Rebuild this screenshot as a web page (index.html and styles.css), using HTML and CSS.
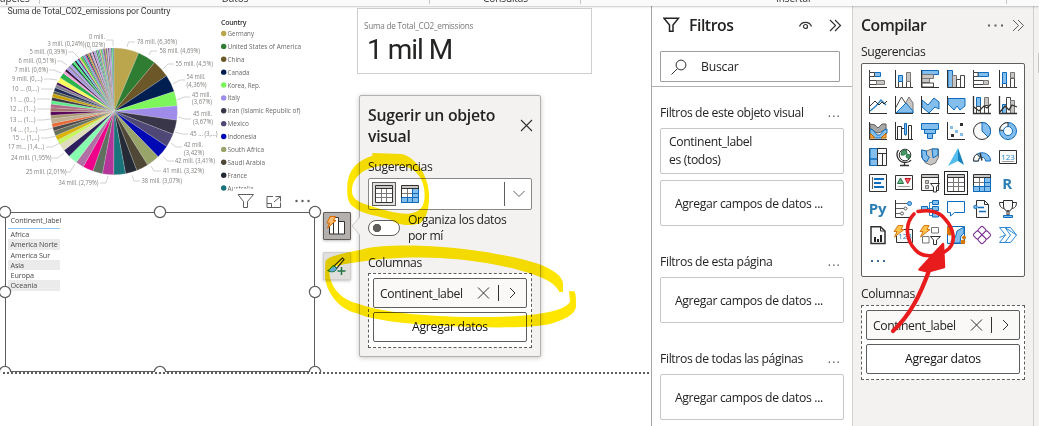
FILE: index.html
```html
<!DOCTYPE html>
<html lang="es">
<head>
<meta charset="utf-8">
<title>Informe</title>
<link rel="stylesheet" href="styles.css">
</head>
<body>
<header class="ribbon">
  <div class="group g1"><span>apeles</span></div>
  <div class="group g2"><span>Datos</span></div>
  <div class="group g3"><span>Consultas</span></div>
  <div class="group g4"><span>Insertar</span></div>
</header>
<main class="workspace">
  <section class="canvas">
    <svg class="pie" width="350" height="194" viewBox="0 6 350 194">
      <text class="pie-title" x="7.5" y="14" textLength="163">Suma de Total_CO2_emissions por Country</text>
      <g id="slices"></g>
      <g id="leaders"></g>
      <g id="labels"></g>
      <text class="legend-title" x="221" y="25.3" textLength="25.5">Country</text>
      <g id="legend"></g>
    </svg>

    <div class="card-visual">
      <div class="card-label">Suma de Total_CO2_emissions</div>
      <div class="card-value">1 mil M</div>
    </div>

    <svg class="visual-tools" width="76" height="18" viewBox="0 0 76 18" fill="none" stroke="#605e5c">
      <path d="M1 1.500h15.500L10.500 8.500v6h-4v-6z" stroke-width="1"/>
      <path d="M36 3.500h-6v11h13.500v-5M30 10.500h4.500v4M38.500 3.500h5v5M43.500 3.500l-6.500 5.500"/>
      <g fill="#605e5c" stroke="none"><circle cx="59.500" cy="8" r="1.200"/><circle cx="65.500" cy="8" r="1.200"/><circle cx="71.500" cy="8" r="1.200"/></g>
    </svg>

    <div class="table-visual">
      <div class="data-table">
        <div class="th">Continent_label</div>
        <div>Africa</div><div>America Norte</div><div>America Sur</div><div>Asia</div><div>Europa</div><div>Oceania</div>
      </div>
    </div>
    <svg class="handles" width="324" height="168" viewBox="-1 205 324 168" fill="#fff" stroke="#605e5c" stroke-width="1.200">
      <circle cx="5" cy="212" r="5.600"/><circle cx="160" cy="212" r="5.600"/><circle cx="315" cy="212" r="5.600"/>
      <circle cx="5" cy="292" r="5.600"/><circle cx="315" cy="292" r="5.600"/>
      <circle cx="5" cy="372" r="5.600"/><circle cx="160" cy="372" r="5.600"/><circle cx="315" cy="372" r="5.600"/>
    </svg>
    <div class="page-edge"></div>

    <div class="side-buttons">
      <button class="side-btn active"><svg width="22" height="22" viewBox="0 0 22 22"><path d="M3.500 8.500h4v10.500h-4zM7.500 2.500h5V19h-5zM12.500 6.500h6V19h-6z" fill="#fff" stroke="#323130"/><path d="M4 1.500h5.500L7.500 5.500h2.500L1.500 13l2-5H1z" fill="#ffb96a" stroke="#d86a00"/></svg></button>
      <button class="side-btn"><svg width="22" height="22" viewBox="0 0 22 22"><path d="M16.500 3L8 11l2.500 2.500L18 4.500z" fill="#fff" stroke="#323130" stroke-width="1.200"/><path d="M8 10.500c-3 0-3 4.500-6.500 5 3 2 8.500 2 9-2z" fill="#68a9e0" stroke="#107c41"/><path d="M15.500 12v8M11.500 16h8" stroke="#217346" stroke-width="1.500"/></svg></button>
    </div>

    <div class="popup">
      <svg class="beak" width="9" height="18" viewBox="0 0 9 18"><path d="M9 0L1 9l8 9" fill="#f3f2f1" stroke="#c8c6c4"/></svg>
      <div class="popup-head">
        <h2>Sugerir un objeto visual</h2>
        <svg width="13" height="13" viewBox="0 0 13 13"><path d="M1 1l11 11M12 1L1 12" stroke="#323130" stroke-width="1.100"/></svg>
      </div>
      <div class="lbl sug">Sugerencias</div>
      <div class="combo">
        <span class="pick"><svg width="18" height="18" viewBox="0 0 18 18"><use href="#i-table"/></svg></span>
        <svg class="second" width="18" height="18" viewBox="0 0 18 18"><use href="#i-matrix"/></svg>
        <span class="bar"></span>
        <svg width="12" height="8" viewBox="0 0 12 8" fill="none" stroke="#605e5c"><path d="M.5 1L6 6.500 11.500 1"/></svg>
      </div>
      <div class="toggle-row"><span class="toggle"></span><span class="toggle-text">Organiza los datos<br>por mí</span></div>
      <div class="lbl col">Columnas</div>
      <div class="well">
        <div class="field"><span>Continent_label</span><svg width="40" height="16" viewBox="0 0 40 16" fill="none" stroke="#323130"><path d="M1 2.500l11 11M12 2.500l-11 11M21.500 0v16M33 3l5 5-5 5"/></svg></div>
        <div class="add">Agregar datos</div>
      </div>
    </div>
  </section>

  <aside class="filters">
    <div class="filters-top">
      <div class="pane-head">
        <svg width="17" height="16" viewBox="0 0 17 16"><path d="M1 1.200h14.500L10 8v6.300H6.500V8z" fill="none" stroke="#252423" stroke-width="1.500"/></svg>
        <h2>Filtros</h2>
        <svg class="eye" width="13" height="9" viewBox="0 0 13 9" fill="none" stroke="#323130" stroke-width="1.200"><path d="M.5 5.500C2.500 0 10.500 0 12.500 5.500"/><circle cx="6.500" cy="5.500" r="2"/></svg>
        <svg width="13" height="13" viewBox="0 0 13 13" fill="none" stroke="#323130" stroke-width="1.200"><path d="M1 1l5.500 5.500L1 12M6 1l5.500 5.500L6 12"/></svg>
      </div>
      <div class="search"><svg width="16" height="16" viewBox="0 0 16 16" fill="none" stroke="#323130"><circle cx="10" cy="6" r="4.900"/><path d="M6.500 9.500L.5 15.500"/></svg><span>Buscar</span></div>
    </div>
    <div class="filter-group">
      <div class="filter-title"><span>Filtros de este objeto visual</span><i>...</i></div>
      <div class="filter-card">Continent_label<br>es (todos)</div>
      <div class="filter-card drop">Agregar campos de datos ...</div>
    </div>
    <div class="filter-group">
      <div class="filter-title"><span>Filtros de esta página</span><i>...</i></div>
      <div class="filter-card drop">Agregar campos de datos ...</div>
    </div>
    <div class="filter-group">
      <div class="filter-title"><span>Filtros de todas las páginas</span><i>...</i></div>
      <div class="filter-card drop">Agregar campos de datos ...</div>
    </div>
  </aside>

  <aside class="build">
    <div class="pane-head">
      <h2>Compilar</h2>
      <svg class="dots" width="16" height="3" viewBox="0 0 16 3" fill="#605e5c"><path d="M0 .5h2v2H0zM6.500.5h2v2h-2zM13 .5h2v2h-2z"/></svg>
      <svg width="13" height="13" viewBox="0 0 13 13" fill="none" stroke="#605e5c"><path d="M1 1l5.500 5.500L1 12M6 1l5.500 5.500L6 12"/></svg>
    </div>
    <div class="lbl">Sugerencias</div>
    <div class="gallery">
      <svg viewBox="0 0 18 18"><path class="k" d="M.5 0v17.500H18"/><path class="b" d="M5.500 2.500h6v4h-6z"/><path class="w" d="M.5 2.500h5v4h-5z"/><path class="w" d="M.5 10.500h7v4h-7z"/><path class="g" d="M7.500 10.500h8v4h-8z"/></svg>
      <svg viewBox="0 0 18 18"><path class="k" d="M.5 0v17.500H18"/><path class="w" d="M3.500 11.500h4v6h-4zM11.500 11.500h4v6h-4z"/><path class="b" d="M3.500 5.500h4v6h-4z"/><path class="g" d="M11.500 2.500h4v9h-4z"/></svg>
      <svg viewBox="0 0 18 18"><path class="b" d="M1 .5h16.500v4H1z"/><path class="g" d="M1 4.500h11.500v4H1zM1 8.500h7.500v4H1z"/><path class="w" d="M1 13h11.500v4H1z"/><path class="k" d="M.5 0v17.500H18"/></svg>
      <svg viewBox="0 0 18 18"><path class="b" d="M1 .5h4.500v17H1z"/><path class="g" d="M5.500 5.500h4v12h-4z"/><path class="w" d="M9.500 9.500h4v8h-4zM13.500 5.500h4v12h-4z"/><path class="k" d="M.5 0v17.500H18"/></svg>
      <svg viewBox="0 0 18 18"><path class="k" d="M.5 0v17.500H18"/><path class="b" d="M5 2.500h10.500v4H5z"/><path class="w" d="M.5 2.500H5v4H.5zM.5 10.500h10v4H.5z"/><path class="g" d="M10.500 10.500h5v4h-5z"/></svg>
      <svg viewBox="0 0 18 18"><path class="k" d="M.5 0v17.500H18"/><path class="w" d="M3.500 13.500h4v4h-4zM11.500 8.500h4v9h-4z"/><path class="b" d="M3.500 2.500h4v11h-4z"/><path class="g" d="M11.500 2.500h4v5.500h-4z"/></svg>

      <svg viewBox="0 0 18 18"><path class="bl" stroke-width="1.400" d="M1 15l6-5 5-6 5 5"/><path class="k" d="M.5 0v17.500H18M1 10l5-5 4 4 3-3 2 2 3-3"/></svg>
      <svg viewBox="0 0 18 18"><path class="g" d="M8 11l6-10 4 6v10z"/><path class="w" d="M.5 12L6.500 1l7 11v5H.5z"/><path class="b" d="M1 17l10-10 7 8v2z"/><path class="k" d="M.5 0v17.500H18"/></svg>
      <svg viewBox="0 0 18 18"><path class="b" d="M1 4l6 5 6-7 5 4v7l-4-2-6 6-7-6z"/><path class="k" d="M.5 0v17.500H18"/></svg>
      <svg viewBox="0 0 18 18"><path class="b" d="M1 2.500h17V10l-5 4-3-4-3 4-6-6z"/><path class="k" d="M.5 0v17.500H18"/></svg>
      <svg viewBox="0 0 18 18"><path class="b" d="M3.500 1.500h4v9h-4z"/><path class="g" d="M11.500 1.500h4v8h-4z"/><path class="w" d="M3.500 10.500h4v7h-4zM11.500 9.500h4v8h-4z"/><path class="k" stroke-width="1.300" d="M.5 0v17.500H18M1 11l5 4 5-5 3 2 4-4"/></svg>
      <svg viewBox="0 0 18 18"><path class="b" d="M3.500 8.500h4v9h-4z"/><path class="w" d="M7.500 1.500h4v16h-4z"/><path class="g" d="M11.500 4.500h4v13h-4z"/><path class="k" stroke-width="1.300" d="M.5 0v17.500H18M1 16l5-6 4 4 3-5 5 2"/></svg>

      <svg viewBox="0 0 18 18"><path d="M1 2l5 1 3 3 4-4h4v5l-5 3-3 1-3-1-5-4z" fill="#a9a7a5" stroke="#605e5c"/><path class="b" d="M1 7l3 1 4 5h3l4-5 3-1v4l-5 5H6l-5-5z"/><path d="M1 11l5 5H1zM17 11l-5 5h5z" fill="#f5a742" stroke="#b86200"/><path class="k" d="M.5 0v17.500H18"/></svg>
      <svg viewBox="0 0 18 18"><path class="k" d="M.5 0v17.500H18M2.500 17V4.500h4V17M6.500 6.500h4v7"/><path class="b" d="M9.500 1.500h2v11h-2z"/><path class="k" d="M13.500 17V3.500h3V17"/></svg>
      <svg viewBox="0 0 18 18"><path class="b" d="M.5 1.500h17v6H.5zM3.500 7.500h11v4h-11zM6.500 11.500h5v5h-5z"/></svg>
      <svg viewBox="0 0 18 18"><path class="k" d="M.5 0v17.500H18"/><path fill="#83beec" d="M3 4h3v3H3zM8 8h3v3H8zM13 11h3v3h-3z"/><path fill="#323130" d="M13 1h3v3h-3zM4 12h3v3H4z"/></svg>
      <svg viewBox="0 0 18 18"><circle class="k f" cx="9" cy="9" r="8.500"/><path class="b" d="M9 .5A8.500 8.500 0 0 1 15 15L9 9z"/></svg>
      <svg viewBox="0 0 18 18"><circle class="b" cx="9" cy="9" r="8.500"/><path class="k f" d="M9 9V.5A8.500 8.500 0 0 0 .5 8z"/><circle class="bw" cx="9" cy="9" r="4.500"/></svg>

      <svg viewBox="0 0 18 18"><path class="k f" d="M.5.5h17v17H.5z"/><path class="b" d="M1 .5h7.500V11H1zM1 11h7.500v6.500H1z"/><path class="k" d="M8.500.5v17M9 5.500h8.500M13.500 5.500v12"/></svg>
      <svg viewBox="0 0 18 18"><circle cx="10" cy="7" r="5.800" fill="#fff" stroke="#323130"/><path d="M7 3l4-1 1 3-3 2H6zM12 6l3 1-1 4-3-2z" fill="#4b9b68" stroke="#217346"/><path class="k" stroke-width="1.300" d="M3.500 2C0 7 3 14 10 14.500c3 0 5-1 6-2.500M9.500 14.500v3M5 17.500h9"/></svg>
      <svg viewBox="0 0 18 18"><path class="g" d="M.5 2l5 1 5-2h7v8l-3 6-5 2-5-2-4-6z"/><path class="b" d="M.5 2l5 1v4l3 2-3 5-4-3zM11 1h6v6l-5 3z"/></svg>
      <svg viewBox="0 0 18 18"><path d="M11 0L1 18l10-5z" fill="#55bdee"/><path d="M11 0l6 17-6-4z" fill="#1683bf"/></svg>
      <svg viewBox="0 0 18 18"><path class="b" d="M.5 13C.5 2 17.500 2 17.500 13h-5c0-5-7-5-7 0z"/><path class="k f" d="M.5 13C.5 9 2 7 4 6l3 3.500C6 10 5.500 11 5.500 13z"/><path d="M9 12.500L7 5" stroke="#323130" stroke-width="1.500"/></svg>
      <svg viewBox="0 0 18 18"><path class="k f" d="M.5 2.500h17v13H.5z"/><text x="9" y="11.500" class="num">123</text><path d="M3 13.500h12" stroke="#a19f9d"/></svg>

      <svg viewBox="0 0 18 18"><path class="k f" d="M.5.5h17v17H.5z"/><path d="M3.500 3v12" stroke="#605e5c"/><path d="M5 5h10M5 9h7M5 13h10" stroke="#0f6cbd" stroke-width="2"/></svg>
      <svg viewBox="0 0 18 18"><path class="k f" d="M.5 1.500h17v14H.5z"/><path d="M2.500 9.500L5.500 4l3 5.500z" fill="#70b78a" stroke="#217346"/><path d="M10 4.500h5.500l-2.800 5z" fill="#f06870" stroke="#c50f1f"/><path d="M3 12.500h12" stroke="#a19f9d"/></svg>
      <svg viewBox="0 0 18 18"><path class="k f" d="M.5.5h17v16H.5z"/><path d="M1 1h16v2H1z" fill="#c8c6c4"/><path class="k" d="M.5 3.500h17"/><path class="g" d="M4.500 6.500h3v3h-3zM4.500 11.500h3v3h-3z"/><path d="M9.500 9.500h9L15.500 13v5h-3v-5z" fill="#fff" stroke="#323130"/></svg>
      <svg class="selected" viewBox="0 0 18 18"><g id="i-table"><path d="M.5.5h17v17H.5z" fill="#fff" stroke="#323130"/><path d="M1 1h16v2H1z" fill="#c8c6c4"/><path d="M1 8.500h16M1 12.500h16M6.500 4v13M11.500 4v13" stroke="#797775" fill="none"/><path d="M.5 3.500h17" stroke="#323130"/></g></svg>
      <svg viewBox="0 0 18 18"><g id="i-matrix"><path d="M.5.5h17v17H.5z" fill="#fff" stroke="#323130"/><path d="M1 1h16v2H1z" fill="#c8c6c4"/><path d="M12 4h5.500v13.500H1v-4.500h11z" fill="#83beec"/><path d="M1 8.500h11M6.500 4v9" stroke="#797775"/><path d="M11.500 4v13.500M.5 12.500h17M12 8.500h5.500M6.500 13v4.500M17.500 4v13.500H.5V13" stroke="#0f6cbd" fill="none"/><path d="M.5 3.500h17" stroke="#323130"/></g></svg>
      <svg viewBox="0 0 18 18"><text x="8" y="14.500" class="letter">R</text></svg>

      <svg viewBox="0 0 18 18"><text x="8.500" y="13.500" class="letter">Py</text></svg>
      <svg viewBox="0 0 18 18"><path d="M.5 0v17.500H16" fill="none" stroke="#323130"/><path d="M1 3.500h11M1 8.500h8M1 13.500h5" stroke="#605e5c"/><circle class="b" cx="14.500" cy="3.500" r="2"/><circle cx="10.500" cy="8.500" r="1.500" fill="#fff" stroke="#605e5c"/><circle cx="7" cy="13.500" r="1.500" fill="#fff" stroke="#605e5c"/></svg>
      <svg viewBox="0 0 18 18"><path class="bl" d="M6 8.500h5M8.500 2.500v13M8.500 2.500H12M8.500 15.500H12"/><path class="b" d="M.5 6.500h6v4h-6zM11.500.5h6v4h-6zM11.500 6.500h6v4h-6zM11.500 13h6v4h-6z"/></svg>
      <svg viewBox="0 0 18 18"><path class="bw" d="M.5 1.500h17v11H7.500L3.500 16v-3.500h-3z"/></svg>
      <svg viewBox="0 0 18 18"><path class="k f" d="M3.500.5h8l4 4v13h-12z"/><path class="k" d="M11.500.5v4h4"/><circle class="b" cx="2.500" cy="7" r="1.700"/><path d="M5 7.500h6M6 11.500h7" stroke="#0f6cbd" stroke-width="1.400"/></svg>
      <svg viewBox="0 0 18 18"><path class="k" d="M4 2.500H.5c0 4 2 6 5 6M14 2.500h3.500c0 4-2 6-5 6"/><path class="k f" d="M4.500.5h9V6c0 3-2 5-4.500 5S4.500 9 4.500 6zM8 11h2v4H8z"/><path class="b" d="M4.500 15.500h9v2h-9z"/></svg>

      <svg viewBox="0 0 18 18"><path class="k f" stroke-width="1.500" d="M2 .7h9.500L16 5v12.500H2z"/><path class="k" d="M11.500.5V5H16"/><path d="M5 11h2v5H5zM8 13h2v3H8zM11 9h2v7h-2z" fill="#252423"/></svg>
      <svg viewBox="0 0 18 18"><path class="k f" d="M1.500 3.500h16v13h-16z"/><text x="10" y="13" class="num">123</text><path class="o" d="M3-.5h5L6 3.500h3L-.5 11 2 5.500h-3z"/></svg>
      <svg viewBox="0 0 18 18"><path d="M10.500 1.500h7v5.500h-7zM1.500 10.500h6.500v6.500H1.500z" fill="#fff" stroke="#797775"/><path d="M9.500 10.500h10L15.500 14v4.500h-3V14z" fill="#fff" stroke="#323130"/><path class="o" d="M3-.5h5L6 3.500h3L-.5 11 2 5.500h-3z"/></svg>
      <svg viewBox="0 0 18 18"><path d="M.5.5h17v17H.5z" fill="#fff" stroke="#0f6cbd"/><path d="M3 17l5-4 2-8 7-4v6l-3 3-1 7z" fill="#83beec" stroke="#0f6cbd"/><path d="M1 17l5-6 3 1-3 5z" fill="#c8e0f4"/><path d="M0 1h4l1 6-2 3-3-2z" fill="#d87500"/><circle cx="17" cy="11.500" r="1.900" fill="#d87500"/><circle cx="16" cy="16" r="2.300" fill="#d87500"/></svg>
      <svg viewBox="0 0 18 18"><g fill="#fff" stroke="#7b2d91" stroke-width="1.100"><rect x="5.700" y="1.200" width="6.600" height="6.600" rx="1.500" transform="rotate(45 9 4.500)"/><rect x="1.200" y="5.700" width="6.600" height="6.600" rx="1.500" transform="rotate(45 4.500 9)"/><rect x="10.200" y="5.700" width="6.600" height="6.600" rx="1.500" transform="rotate(45 13.500 9)"/><rect x="5.700" y="10.200" width="6.600" height="6.600" rx="1.500" transform="rotate(45 9 13.500)"/></g></svg>
      <svg viewBox="0 0 18 18"><path d="M.5 1.500H6L17.500 9 M.5 1.500l6 7.500-6 7.500H6L11.500 9 6 1.500M6 1.500h5.500L17.500 9l-6 7.500H6M.5 11.500L6.500 9" fill="none" stroke="#2b88d8"/></svg>
      <svg class="more" viewBox="0 0 18 18"><path fill="#3b6da0" d="M2 7h2v2H2zM8 7h2v2H8zM14 7h2v2h-2z"/></svg>
    </div>
    <div class="lbl col">Columnas</div>
    <div class="well">
      <div class="field"><span>Continent_label</span><svg width="40" height="16" viewBox="0 0 40 16" fill="none" stroke="#323130"><path d="M1 2.500l11 11M12 2.500l-11 11M21.500 0v16M33 3l5 5-5 5"/></svg></div>
      <div class="add">Agregar datos</div>
    </div>
  </aside>
  <div class="rail"><span></span></div>
</main>

<svg class="marker highlight" width="1039" height="426" viewBox="0 0 1039 426">
  <g fill="#ffe600" fill-rule="evenodd">
    <path transform="translate(320 90) scale(.33333)" d="M157 189L245 192C290 203 325 260 327 310C328 350 322 385 300 400C270 410 230 405 215 390C170 375 130 375 100 350C85 340 80 320 82 290C84 250 100 215 157 197ZM150 235C120 245 97 270 96 298C95 325 110 335 150 347C190 360 230 372 265 371C300 368 314 350 314 315C314 270 290 230 240 227C200 223 170 228 150 235Z"/>
    <path transform="translate(320 230) scale(.33333)" d="M16 95C20 80 60 72 120 60C160 48 210 46 300 47C430 50 570 75 650 100C700 118 728 140 729 160V186H718C712 170 690 150 650 137C560 105 440 85 330 83C240 80 160 88 100 98C60 105 30 108 28 125C30 170 60 205 110 220C180 245 280 256 400 260C530 264 640 258 690 245C725 238 745 225 750 215L747 183L762 184C768 190 768 200 768 230C765 255 730 270 690 282C640 294 520 294 400 289C280 284 170 275 110 250C50 235 18 180 15 140Z"/>
  </g>
</svg>
<svg class="marker" width="1039" height="426" viewBox="0 0 1039 426">
  <path d="M918 211.500C928 209.500 939 211 945 219C954 229 956 241 949 248.500C941 256.500 923 259 915.500 250C905 239 905 223 914 214" fill="none" stroke="#e81c1c" stroke-width="3.600" stroke-linecap="round"/>
  <path d="M943 244L919.500 269.500L928 271.500L944 267Z" fill="#e81c1c" stroke="#e81c1c" stroke-width="2.500" stroke-linejoin="round"/>
  <path d="M893 331C910 315 920 296 930 268" fill="none" stroke="#e81c1c" stroke-width="4.200" stroke-linecap="round"/>
</svg>
<script src="chart.js"></script>
</body>
</html>
```
FILE: styles.css
```css
* { box-sizing: border-box; }
body { margin: 0; width: 1039px; height: 426px; overflow: hidden; position: relative; background: #fff; color: #252423; font-family: "Open Sans", "Noto Sans", sans-serif; font-size: 12.2px; letter-spacing: -.37px; }
h2 { margin: 0; font-size: 15.800px; font-weight: 600; letter-spacing: -.27px; }
svg { display: block; flex: none; }

.ribbon { position: relative; z-index: 2; display: flex; height: 6px; background: #fafafa; box-shadow: 0 1px 2px rgba(0,0,0,.22); }
.group { position: relative; height: 6px; padding-bottom: 2px; overflow: hidden; display: flex; align-items: flex-end; justify-content: center; font-size: 10px; letter-spacing: -.1px; line-height: 11px; color: #323130; }
.group::after { content: ""; position: absolute; right: 0; top: 0; width: 1px; height: 4px; background: #c8c6c4; }
.g1 { width: 40px; justify-content: flex-start; }
.g2 { width: 390px; }
.g3 { width: 151px; }
.g4 { width: 426px; }

.workspace { display: flex; height: 420px; }
.canvas { position: relative; width: 651px; background: #fff; }
.pie { position: absolute; left: 0; top: 0; }
.pie text { font-size: 6.400px; fill: #84827f; letter-spacing: 0; }
.pie .pie-title { font: 8.800px Roboto, sans-serif; fill: #3b3a39; }
.pie .legend-title { font-weight: 600; font-size: 7px; fill: #323130; }
.pie .legend-item { font-size: 7px; fill: #6a6866; }
.pie polyline { fill: none; stroke: #c8c6c4; stroke-width: .8; }

.card-visual { position: absolute; left: 357px; top: 2px; width: 235px; height: 66px; border: 1px solid #cfcfcf; padding: 10px 6px; }
.card-label { font-size: 8.200px; line-height: 12px; letter-spacing: -.25px; color: #77797c; padding-top: 1px; }
.card-value { font: 28px/32px Roboto, sans-serif; letter-spacing: -1px; padding: 2px 0 0 3px; }

.visual-tools { position: absolute; left: 237px; top: 187px; }
.table-visual { position: absolute; left: 5px; top: 206px; width: 310px; height: 160px; border: 1px solid #605e5c; background: #fff; padding: 1px 2px; }
.data-table { width: 52px; font-size: 7.200px; line-height: 10px; letter-spacing: -.1px; color: #4b4a49; white-space: nowrap; }
.data-table div { padding-left: 2.500px; height: 10.300px; }
.data-table .th { height: 15px; line-height: 12px; border-bottom: 1px solid #8cc8f5; }
.data-table div:nth-child(odd):not(.th) { background: #ebebeb; }
.handles { position: absolute; left: -1px; top: 199px; }
.page-edge { position: absolute; left: 3px; top: 366px; width: 647px; height: 2px; background: repeating-linear-gradient(90deg, #605e5c 0 2px, #fff 2px 4px); }

.side-buttons { position: absolute; left: 323px; top: 206px; display: flex; flex-direction: column; gap: 12px; }
.side-btn { width: 28px; height: 28px; padding: 2px; background: #e1dfdd; border: 1px solid #d2d0ce; border-radius: 1px; box-shadow: 0 1px 3px rgba(0,0,0,.25); }
.side-btn.active { background: #b3b0ad; border-color: #605e5c; }

.popup { position: absolute; left: 359px; top: 89px; width: 182px; height: 262px; padding: 9px 8px 8px; background: #f3f2f1; border: 1px solid #b3b0ad; border-radius: 2px; box-shadow: 0 1px 5px rgba(0,0,0,.22); }
.beak { position: absolute; left: -9px; top: 121px; }
.popup-head { display: flex; justify-content: space-between; align-items: center; height: 41px; }
.popup-head h2 { width: 140px; line-height: 20.500px; }
.popup-head svg { margin: -1px -1px 0 0; }
.lbl { line-height: 16px; }
.popup .sug { margin-top: 13px; }
.combo { display: flex; align-items: center; height: 32px; margin-top: 3px; width: 164px; border: 1px solid #8a8886; border-radius: 2px; background: #fff; padding-left: 3px; }
.pick { display: flex; width: 24px; height: 24px; padding: 2px; background: #e1dfdd; border: 1px solid #605e5c; }
.second { margin-left: 5px; }
.bar { width: 1px; height: 24px; background: #605e5c; margin: 0 8px 0 85px; }
.toggle-row { display: flex; margin-top: 2px; gap: 8px; height: 33px; }
.toggle { display: block; width: 32px; height: 16px; margin-top: 8px; border: 1px solid #605e5c; border-radius: 8px; background: radial-gradient(circle at 8px 7px, #605e5c 3.800px, #fff 4.500px); }
.toggle-text { line-height: 16px; }
.popup .col { margin-top: 10px; }
.well { width: 164px; height: 75px; padding: 4px; border: 1px dashed #605e5c; background: #fff; display: flex; flex-direction: column; gap: 4px; margin-top: 2px; }
.field, .add { height: 30px; flex: none; border: 1px solid #605e5c; border-radius: 2px; display: flex; align-items: center; }
.field { justify-content: space-between; padding: 0 9px 0 6px; background: #faf9f8; letter-spacing: -.4px; }
.add { justify-content: center; font-weight: 500; letter-spacing: -.28px; background: #fff; color: #11100f; padding-bottom: 1px; }

.filters { width: 201px; border-left: 1px solid #a6a6a6; background: #fff; }
.filters-top { height: 81px; border-bottom: 1px solid #b3b0ad; padding: 8px 10px 0 8px; }
.pane-head { display: flex; align-items: center; height: 22px; }
.filters .pane-head { padding-left: 3px; }
.filters .pane-head h2 { margin-left: 9px; letter-spacing: -.45px; }
.eye { margin-left: auto; margin-right: 17px; }
.search { display: flex; align-items: center; gap: 14px; width: 180px; height: 31px; border: 1px solid #a19f9d; border-radius: 1px; margin-top: 15px; padding-left: 10px; letter-spacing: -.2px; }
.filter-group { padding: 17px 8px 0; }
.filter-group + .filter-group { padding-top: 27px; }
.filter-title { display: flex; justify-content: space-between; height: 17px; line-height: 17px; margin-bottom: 7px; padding-right: 3px; }
.filter-title i { font-style: normal; letter-spacing: 1.200px; color: #605e5c; }
.filter-card { width: 184px; height: 46px; border: 1px solid #c8c6c4; border-radius: 2px; padding: 4px 8px; line-height: 18px; }
.filter-card + .filter-card { margin-top: 6px; }
.filter-card.drop { padding: 14px 14px 12px; white-space: nowrap; letter-spacing: -.35px; }

.build { width: 182px; background: #f3f2f1; border-left: 1px solid #d2d0ce; border-right: 1px solid #d2d0ce; padding: 8px 8px 0; }
.build .pane-head { margin-bottom: 8px; }
.build .pane-head h2 { letter-spacing: -.5px; }
.dots { margin-left: auto; margin-right: 8px; }
.gallery { display: grid; grid-template-columns: repeat(6, 18px); grid-auto-rows: 18px; gap: 8px; width: 164px; height: 214px; margin-top: 3px; padding: 6px 7px; border: 1px solid #605e5c; border-radius: 2px; background: #fff; }
.gallery svg { width: 18px; height: 18px; overflow: visible; }
.gallery .selected { outline: 1px solid #252423; outline-offset: 2px; }
.gallery .more { margin-top: 1px; }
.build .col { margin-top: 9px; }
.build .well { margin-top: 3px; }
.k { fill: none; stroke: #323130; }
.k.f { fill: #fafafa; }
.w { fill: #fff; stroke: #484644; }
.g { fill: #c8c6c4; stroke: #797775; }
.b { fill: #83beec; stroke: #0f6cbd; }
.bl { fill: none; stroke: #2b7fc0; }
.bw { fill: #fff; stroke: #0f6cbd; }
.o { fill: #ffc24b; stroke: #d47a18; }
.num { font-size: 8px; fill: #2b88c8; text-anchor: middle; letter-spacing: 0; }
.letter { font-size: 15px; font-weight: 700; fill: #2b7fb5; text-anchor: middle; letter-spacing: -.2px; }
.rail { width: 5px; background: #f3f2f1; padding-top: 47px; }
.rail span { display: block; width: 1px; height: 20px; margin-left: 4px; background: #c8c6c4; }

.marker { position: absolute; left: 0; top: 0; z-index: 3; pointer-events: none; }
.marker.highlight { mix-blend-mode: multiply; }
```
FILE: chart.js
```js
const NS = "http://www.w3.org/2000/svg";
function add(parent, tag, attrs, text) {
  const el = document.createElementNS(NS, tag);
  for (const k in attrs) el.setAttribute(k, attrs[k]);
  if (text) el.textContent = text;
  document.getElementById(parent).appendChild(el);
}

// [end angle in degrees, colour], clockwise from twelve o'clock
const slices = [
  [22.9, "#bba64e"], [39.8, "#2f7d32"], [56, "#6b5728"], [71.7, "#001f50"], [84.9, "#7cf65a"], [98.1, "#9f8bea"],
  [111.3, "#3a364a"], [123.6, "#4f4876"], [135.9, "#0008b4"], [147.9, "#98a46a"], [158.9, "#4f4836"], [169.5, "#252b36"],
  [180.3, "#18737a"], [190.5, "#b5359a"], [199.5, "#5f7060"], [209, "#ef008b"], [216.5, "#b070a5"], [225, "#86ffae"],
  [232, "#2c1e5c"], [238.5, "#dfddbe"], [243, "#c6f55c"], [247.4, "#dcb400"], [251.9, "#66705a"], [255.4, "#4f4848"],
  [259, "#ea6b35"], [263, "#bfae90"], [266.4, "#a99a72"], [269.7, "#570357"], [273.3, "#a87070"], [276.6, "#b06a88"],
  [279.7, "#5cf08c"], [282.8, "#3a3640"], [286.2, "#c8a000"], [288.7, "#4f5a48"], [292, "#1d2a55"], [294.9, "#807d90"],
  [297.2, "#430f55"], [302, "#fbfb62"], [307, "#2bb34e"]
];
const tail = ["#f3a6dc", "#3b1545", "#a99ae8", "#8c8798", "#b79bff", "#1c6d37", "#4cf07c", "#26204a", "#5fe8d8", "#7c2f8c",
  "#d9d35c", "#3ad13a", "#70707e", "#2fd0e0", "#e04aa0", "#283064", "#6b8f3a", "#f08a3c", "#4b2d70", "#8fae9a"];
let end = 307, step = 2.4, n = 0;
while (end < 360) {
  end = Math.min(360, end + step);
  slices.push([end, tail[n++ % tail.length]]);
  step = Math.max(0.7, step * 0.955);
}
const cx = 114, cy = 111.3, r = 63.4;
const pt = (a, q) => (cx + q * Math.sin(a * Math.PI / 180)).toFixed(2) + " " + (cy - q * Math.cos(a * Math.PI / 180)).toFixed(2);
let from = 0;
for (const [to, fill] of slices) {
  add("slices", "path", { d: `M${cx} ${cy}L${pt(from, r)}A${r} ${r} 0 0 1 ${pt(to, r)}Z`, fill, stroke: "#d8d8d8", "stroke-width": to > 300 ? 0.1 : 0.25 });
  from = to;
}

// [left x, baseline y, width, text]
const labels = [
  [137, 44, 40, "78 mill. (6,36%)"], [159.5, 53.3, 40.5, "58 mill. (4,69%)"], [175.500, 66, 37.5, "55 mill. (4,5%)"],
  [186.5, 79, 19, "54 mill."], [186.5, 87, 20, "(4,36%)"], [192, 96.5, 19, "45 mill."], [192, 104.3, 20, "(3,67%)"],
  [193, 116.300, 19, "45 mill."], [193, 124.3, 20, "(3,67%)"], [190, 136.3, 27.5, "45 ... (3,...)"],
  [184, 146.6, 19, "42 mill."], [184, 155, 20, "(3,42%)"], [175, 163, 40, "42 mill. (3,41%)"],
  [163, 173, 41, "41 mill. (3,32%)"], [141.5, 183, 40.500, "38 mill. (3,07%)"], [58.500, 185, 40, "34 mill. (2,79%)"],
  [26, 174.3, 40.5, "25 mill. (2,01%)"], [11, 160, 40.500, "24 mill. (1,95%)"], [8, 149, 36, "17 m... (1,4...)"],
  [12.500, 140, 27, "15 ... (1,...)"], [10, 132, 27.5, "14 ... (1,...)"], [9.500, 121.8, 26, "13 ... (1...)"],
  [9.500, 111, 26, "12 ... (1...)"], [10, 102, 25.5, "11 ... (0...)"], [12, 91.300, 27, "10 ... (0,...)"],
  [12, 81, 30.5, "9 mill. (0,...)"], [14.500, 72, 33.5, "7 mill. (0,6%)"], [18.500, 63.300, 37.5, "6 mill. (0,51%)"],
  [29.500, 54, 37.5, "5 mill. (0,39%)"], [47.500, 46.200, 37, "3 mill. (0,24%)"], [85, 47, 20, "(0,02%)"], [89, 39.200, 16, "0 mill."]
];
for (const [x, y, w, t] of labels) add("labels", "text", { x, y, textLength: w, lengthAdjust: "spacingAndGlyphs" }, t);

const leaders = [
  "127,47 128.500,42 135,42", "149,55 151,51 157,51", "163,69 168,64 174,64", "173,84 180,80 185,80", "177,100 184,97 190,97",
  "178,117 185,119 191,119", "175,132 182,134 188,134", "171,143 176,147 182,147", "163,157 168,161 174,161",
  "151,166 154,171 161,171", "132,175 134,181 140,181", "108,176 106,183 100,183", "75,164 70,172 66,172",
  "64,153 58,158 52,158", "60,143 52,147 46,147", "56,136 48,138 41,138", "53,128 45,130 39,130", "51,119 43,120 37,120",
  "50,109 43,109 37,109", "50,99 42,99 37,99", "53,89 47,89 41,89", "57,80 50,79 44,79", "61,73 54,70 49,70",
  "67,65 61,61 57,61", "79,58 73,52 68,52", "92,51 87,45", "113,46 113,40 106,40"
];
for (const points of leaders) add("leaders", "polyline", { points });

const legend = [
  ["Germany", "#bba64e", 26.5], ["United States of America", "#2f7d32", 73.5], ["China", "#6b5728", 17], ["Canada", "#001f50", 22],
  ["Korea, Rep.", "#7cf65a", 33], ["Italy", "#9f8bea", 12.500], ["Iran (Islamic Republic of)", "#3a364a", 73], ["Mexico", "#4f4876", 21.500],
  ["Indonesia", "#0008b4", 29], ["South Africa", "#98a46a", 36.5], ["Saudi Arabia", "#4f4836", 37.500], ["France", "#252b36", 19.500], ["Australia", "#18737a", 26]
];
legend.forEach(([name, fill, w], i) => {
  const y = 33.500 + i * 12.88;
  add("legend", "circle", { cx: 223.7, cy: y, r: 2.7, fill });
  add("legend", "text", { class: "legend-item", x: 227.5, y: y + 2.5, textLength: w, lengthAdjust: "spacingAndGlyphs" }, name);
});
add("legend", "rect", { x: 233, y: 188.600, width: 30, height: 6, fill: "#fff" });
```
